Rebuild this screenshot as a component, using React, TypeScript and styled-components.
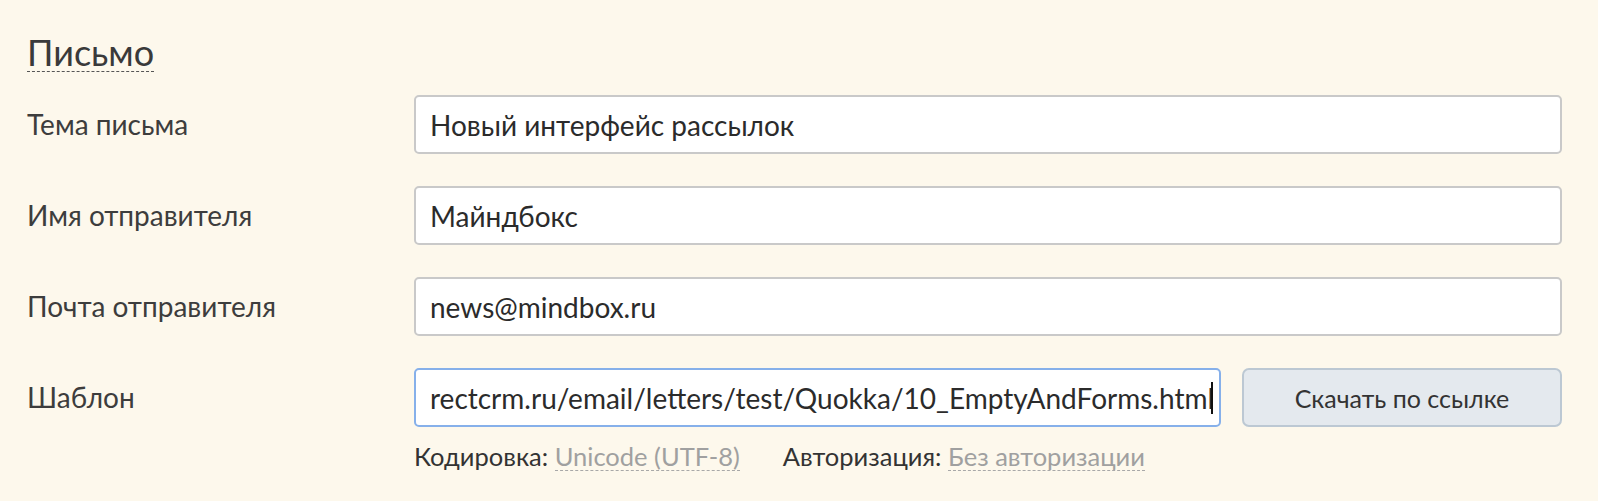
import React from "react";
import styled, { createGlobalStyle } from "styled-components";

const GlobalStyle = createGlobalStyle`
  html, body {
    margin: 0;
    padding: 0;
    background: #fdf8ec;
  }
  body {
    font-family: Lato, "Noto Sans", "Liberation Sans", sans-serif;
    color: #333;
  }
`;

const fields = [
  { label: "Тема письма", value: "Новый интерфейс рассылок" },
  { label: "Имя отправителя", value: "Майндбокс" },
  { label: "Почта отправителя", value: "news@mindbox.ru" },
];

export default function App() {
  return (
    <>
      <GlobalStyle />
      <Page>
        <Title>Письмо</Title>
        <Form>
          {fields.map((f) => (
            <Row key={f.label}>
              <Label>{f.label}</Label>
              <Field>{f.value}</Field>
            </Row>
          ))}
          <Row>
            <Label>Шаблон</Label>
            <TemplateBox>
              <TemplateLine>
                <Field $active>
                  rectcrm.ru/email/letters/test/Quokka/10_EmptyAndForms.html
                  <Caret />
                </Field>
                <Button>Скачать по ссылке</Button>
              </TemplateLine>
              <Hints>
                <span>
                  Кодировка: <HintLink>Unicode (UTF-8)</HintLink>
                </span>
                <span>
                  Авторизация: <HintLink>Без авторизации</HintLink>
                </span>
              </Hints>
            </TemplateBox>
          </Row>
        </Form>
      </Page>
    </>
  );
}

const Page = styled.div`
  padding: 34px 36px 0 27px;
`;

const Title = styled.h2`
  display: inline-block;
  margin: 0 0 23px;
  padding-bottom: 1px;
  font-size: 36px;
  font-weight: 400;
  line-height: 36px;
  color: #3a3a3a;
  border-bottom: 1px dashed #555;
`;

const Form = styled.div`
  display: flex;
  flex-direction: column;
  gap: 32px;
`;

const Row = styled.div`
  display: grid;
  grid-template-columns: 387px 1fr;
  align-items: start;
`;

const Label = styled.div`
  font-size: 28px;
  line-height: 59px;
  color: #3d3d3d;
`;

const Field = styled.div<{ $active?: boolean }>`
  flex: 1;
  min-width: 0;
  height: 59px;
  box-sizing: border-box;
  display: flex;
  align-items: center;
  padding: 0 14px;
  background: #fff;
  border: 2px solid ${(p) => (p.$active ? "#86b0ea" : "#c9c9c9")};
  border-radius: 5px;
  font-size: 28px;
  color: #2b2b2b;
  white-space: nowrap;
  overflow: hidden;
`;

const Caret = styled.span`
  flex: none;
  width: 2px;
  height: 32px;
  background: #111;
  margin-left: -3px;
`;

const TemplateBox = styled.div`
  display: flex;
  flex-direction: column;
  min-width: 0;
`;

const TemplateLine = styled.div`
  display: flex;
  gap: 21px;
`;

const Button = styled.button`
  width: 320px;
  height: 59px;
  flex: none;
  background: #e4e9ee;
  border: 2px solid #bcc8d3;
  border-radius: 7px;
  font-family: inherit;
  font-size: 25px;
  color: #333;
`;

const Hints = styled.div`
  display: flex;
  gap: 43px;
  margin: 14px 0 0 0;
  font-size: 25.5px;
  color: #333;
`;

const HintLink = styled.span`
  display: inline-block;
  line-height: 28px;
  color: #a0a0a0;
  border-bottom: 1px dashed #a8a8a8;
`;
